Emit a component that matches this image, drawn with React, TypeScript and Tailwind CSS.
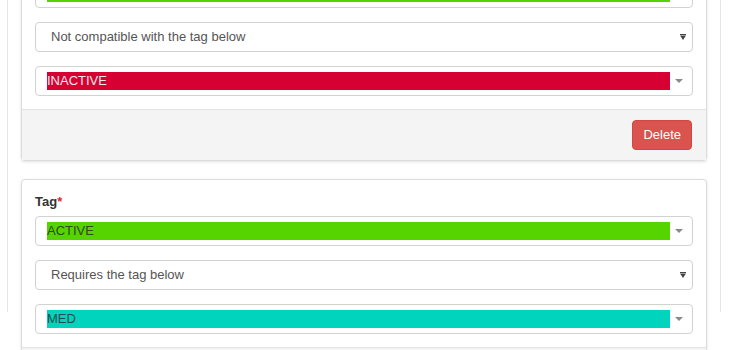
import React from 'react'

type Tag = { label: string; bg: string; text: string }

const tags: Record<string, Tag> = {
  active: { label: 'ACTIVE', bg: 'bg-[#55d400]', text: 'text-[#2f4a1c]' },
  inactive: { label: 'INACTIVE', bg: 'bg-[#d70032]', text: 'text-[#fbe7ec]' },
  med: { label: 'MED', bg: 'bg-[#00d4bd]', text: 'text-[#1f4f49]' },
}

function TagSelect({ tag }: { tag: Tag }) {
  return (
    <div className="flex h-[30px] items-center rounded border border-[#d2d2d2] bg-white pl-[11px] pr-[9px]">
      <div className={`flex h-[18px] flex-1 items-center text-[13px] leading-[18px] ${tag.bg} ${tag.text}`}>
        {tag.label}
      </div>
      <svg width="8" height="4" viewBox="0 0 8 4" className="ml-[5px] shrink-0">
        <polygon points="0,0 8,0 4,4" fill="#8a8a8a" />
      </svg>
    </div>
  )
}

function RuleSelect({ value }: { value: string }) {
  return (
    <div className="flex h-[30px] items-center justify-between rounded border border-[#d2d2d2] bg-white pl-[15px] pr-[6px]">
      <span className="text-[13px] text-[#555]">{value}</span>
      <svg width="6" height="6" viewBox="0 0 6 6" className="shrink-0">
        <rect x="0" y="0" width="6" height="1" fill="#444" />
        <polygon points="0,1.5 6,1.5 3,6" fill="#444" />
      </svg>
    </div>
  )
}

function RuleCard({
  first,
  rule,
  second,
  showLabel,
  className,
}: {
  first: Tag
  rule: string
  second: Tag
  showLabel?: boolean
  className?: string
}) {
  return (
    <div className={`rounded border border-[#dcdcdc] bg-white shadow-[0_1px_3px_rgba(0,0,0,0.12)] ${className ?? ''}`}>
      <div className={`px-[13px] pb-[13px] ${showLabel ? 'pt-[14px]' : 'pt-[15px]'}`}>
        {showLabel && (
          <div className="mb-[6px] h-4 text-[13px] font-bold leading-4 text-[#333]">
            Tag<span className="text-[#e0282f]">*</span>
          </div>
        )}
        <div className="flex flex-col gap-[14px]">
          <TagSelect tag={first} />
          <RuleSelect value={rule} />
          <TagSelect tag={second} />
        </div>
      </div>
      <div className="flex justify-end border-t border-[#e3e3e3] bg-[#f4f4f4] px-[14px] py-[10px]">
        <button className="h-[30px] rounded border border-[#d4463f] bg-[#d9534f] px-[10px] text-[13px] text-white">
          Delete
        </button>
      </div>
    </div>
  )
}

export default function App() {
  return (
    <div className="h-[350px] overflow-hidden bg-white font-['Liberation_Sans',Arial,sans-serif]">
      <div className="ml-[7px] h-full w-[714px] border-x border-[#e6e6e6] px-[13px]">
        <RuleCard
          className="mt-[-38px]"
          first={tags.active}
          rule="Not compatible with the tag below"
          second={tags.inactive}
        />
        <RuleCard
          className="mt-[18px]"
          showLabel
          first={tags.active}
          rule="Requires the tag below"
          second={tags.med}
        />
      </div>
    </div>
  )
}
